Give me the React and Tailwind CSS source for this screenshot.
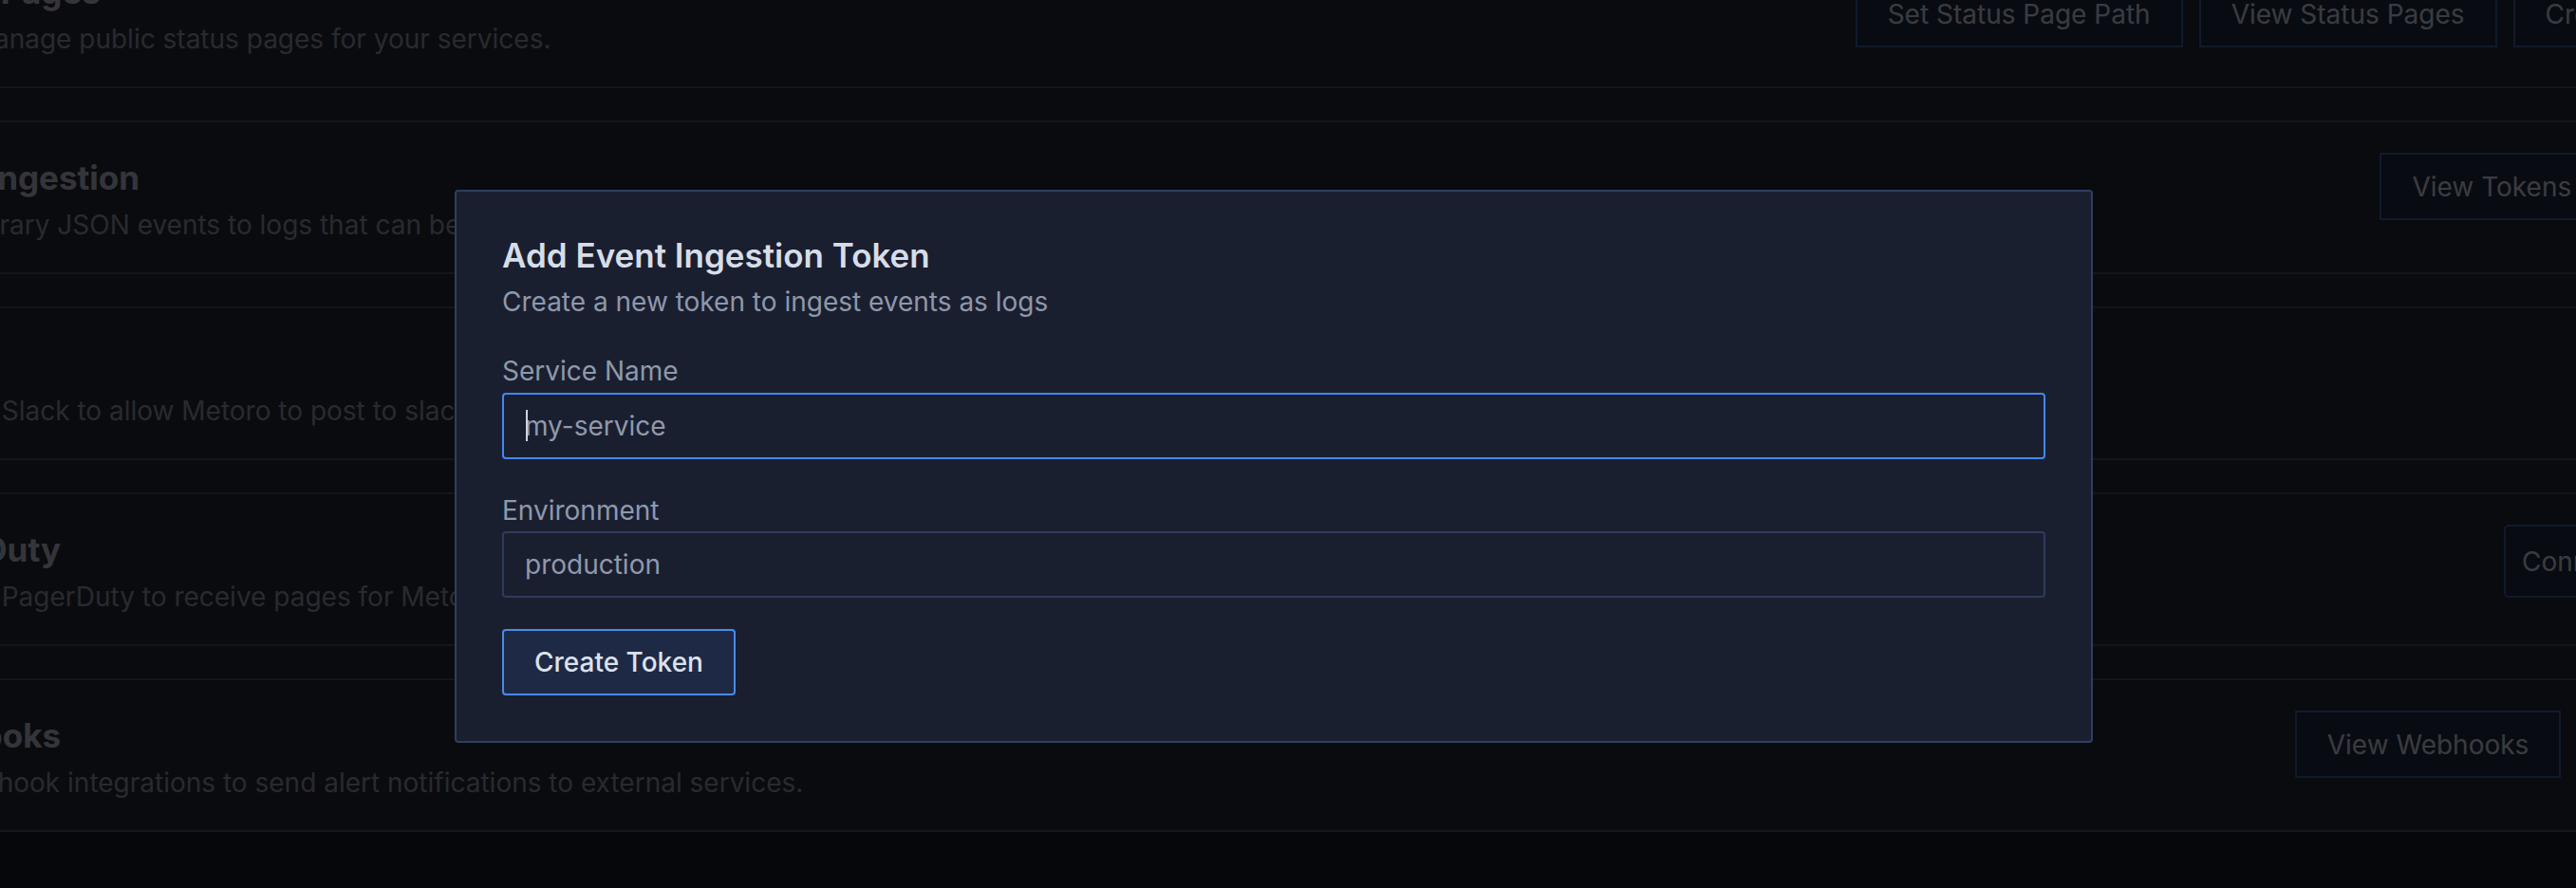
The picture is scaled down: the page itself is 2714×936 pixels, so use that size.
import { useState } from 'react';
import { ExternalLink } from 'lucide-react';

const integrations = [
  {
    title: 'Status Pages',
    description: 'Add & manage public status pages for your services.',
    align: 'items-center',
    actions: [{ label: 'Set Status Page Path' }, { label: 'View Status Pages' }, { label: 'Create Status Page' }],
  },
  {
    title: 'Event Ingestion',
    description: 'Log arbitrary JSON events to logs that can be queried in Metoro.',
    align: 'items-start',
    actions: [{ label: 'View Tokens' }, { label: 'Add Token' }],
  },
  {
    title: 'Slack',
    description: 'Connect Slack to allow Metoro to post to slack channels.',
    align: 'items-start',
    actions: [{ label: 'Add to Slack' }],
  },
  {
    title: 'PagerDuty',
    description: 'Connect PagerDuty to receive pages for Metoro alerts.',
    align: 'items-start',
    actions: [{ label: 'Connect PagerDuty', rounded: true }],
  },
  {
    title: 'Webhooks',
    description: 'Use webhook integrations to send alert notifications to external services.',
    align: 'items-start',
    actions: [{ label: 'View Webhooks' }, { label: 'Add Webhook' }],
  },
];

function ActionButton({ label, rounded }) {
  if (rounded) {
    return (
      <button className="flex h-[77px] shrink-0 items-center gap-[8px] rounded-[5px] border-2 border-[#4068b4] bg-[#202c48] px-[17px] text-[28px] text-[#e8ecff]">
        {label}
        <ExternalLink size={26} />
      </button>
    );
  }
  return (
    <button className="h-[71px] shrink-0 border-2 border-[#4068b4] bg-[#202c48] px-[32px] text-[28px] text-[#e8ecff]">
      {label}
    </button>
  );
}

function IntegrationCard({ item }) {
  return (
    <div className={`flex justify-between border-2 border-[#505478] pt-[32px] pb-[27px] pl-[33px] pr-[33px] ${item.align}`}>
      <div className="min-w-0 whitespace-nowrap">
        <h3 className="text-[35px] leading-[53px] font-bold text-[#d0d4e8]">{item.title}</h3>
        <p className="text-[28px] leading-[46px] text-[#a0a8bc]">{item.description}</p>
      </div>
      <div className="flex shrink-0 gap-[17px]">
        {item.actions.map((a) => (
          <ActionButton key={a.label} label={a.label} rounded={a.rounded} />
        ))}
      </div>
    </div>
  );
}

function TokenDialog() {
  const [serviceName, setServiceName] = useState('');
  const [environment, setEnvironment] = useState('');

  return (
    <div className="absolute left-[479px] top-[200px] w-[1726px] rounded-[4px] border-2 border-[#2f3e62] bg-[#1a1f30] px-[48px] pt-[46px] pb-[48px]">
      <h2 className="text-[35px] leading-[42px] font-semibold text-[#d6dde8]">Add Event Ingestion Token</h2>
      <p className="mt-[10px] text-[28px] leading-[36px] text-[#8e98aa]">Create a new token to ingest events as logs</p>

      <form className="mt-[37px]" onSubmit={(e) => e.preventDefault()}>
        <label className="block text-[28px] leading-[36px] text-[#8f99ab]">Service Name</label>
        <div className="relative mt-[5px]">
          <input
            autoFocus
            value={serviceName}
            onChange={(e) => setServiceName(e.target.value)}
            placeholder="my-service"
            className="block h-[70px] w-full rounded-[4px] border-2 border-[#4387ee] bg-[#1a1f30] pl-[22px] text-[28px] text-[#d9e0ea] caret-[#cbd5e1] outline-none placeholder:text-[#9099ab]"
          />
          {!serviceName && <span className="pointer-events-none absolute left-[25px] top-[18px] h-[33px] w-[2px] bg-[#cbd5e1]" />}
        </div>

        <label className="mt-[36px] block text-[28px] leading-[36px] text-[#8f99ab]">Environment</label>
        <input
          value={environment}
          onChange={(e) => setEnvironment(e.target.value)}
          placeholder="production"
          className="mt-[4px] block h-[70px] w-full rounded-[4px] border-2 border-[#2e3c5c] bg-[#1a1f30] pl-[22px] text-[28px] text-[#d9e0ea] outline-none placeholder:text-[#9099ab]"
        />

        <button
          type="submit"
          className="mt-[33px] h-[70px] rounded-[4px] border-2 border-[#4a89ec] bg-[#1e2a45] px-[32px] text-[28px] font-medium text-[#dbe2ec]"
        >
          Create Token
        </button>
      </form>
    </div>
  );
}

export default function App() {
  return (
    <div className="relative h-[936px] w-full overflow-hidden bg-[#181c28] font-['Inter',sans-serif]">
      <div className="mt-[-69px] ml-[-153px] flex w-[3158px] flex-col gap-[34px] bg-[#282c3c]">
        {integrations.map((item) => (
          <IntegrationCard key={item.title} item={item} />
        ))}
      </div>

      <div className="absolute inset-0 bg-black/75" />

      <TokenDialog />
    </div>
  );
}
